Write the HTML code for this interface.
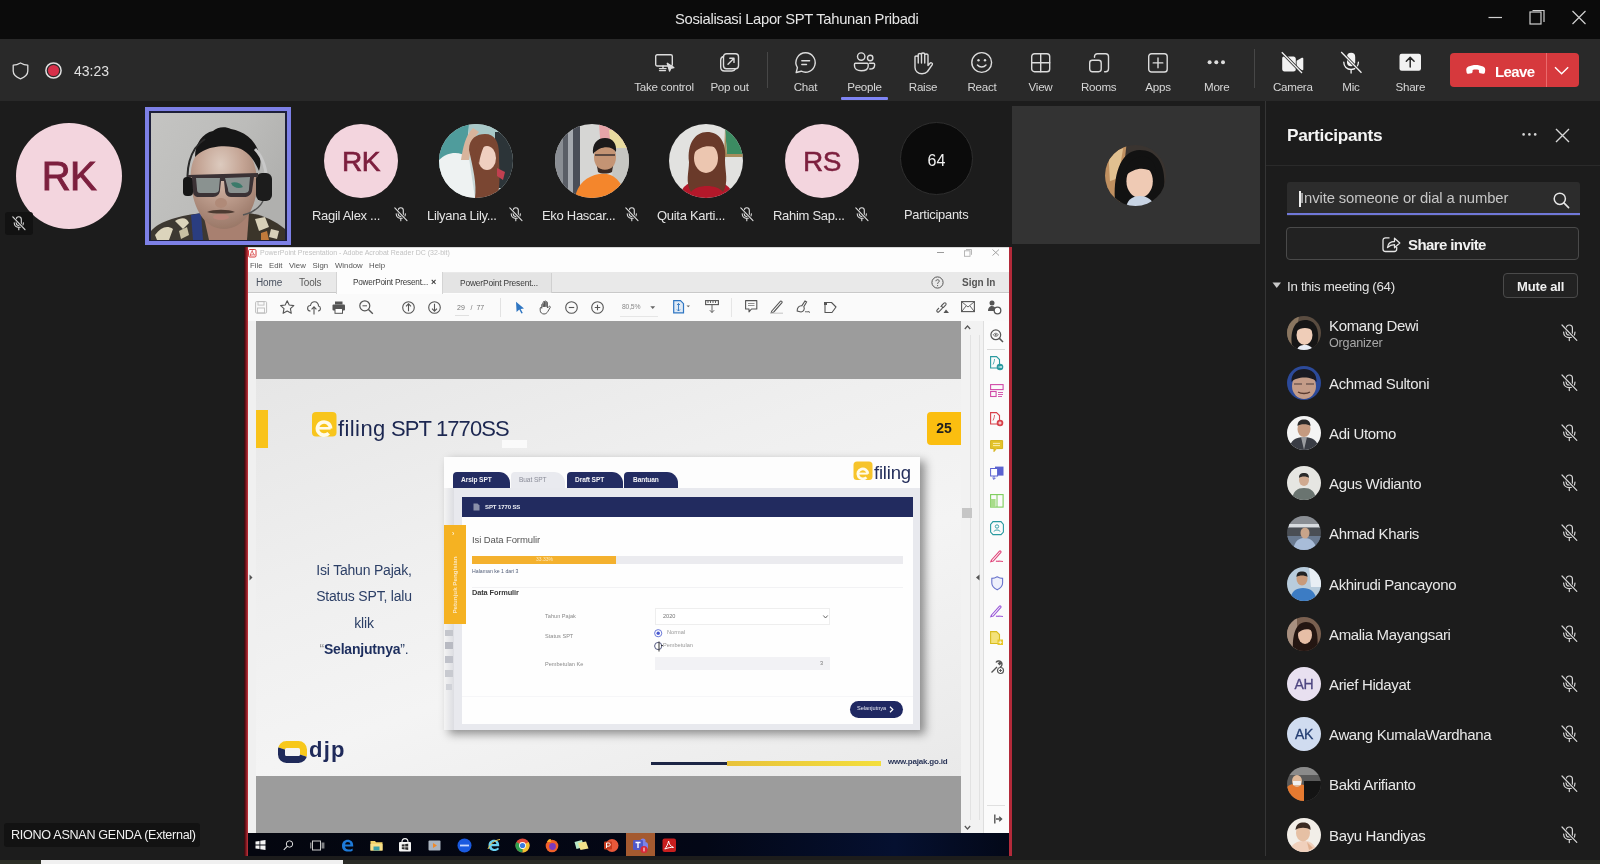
<!DOCTYPE html>
<html><head><meta charset="utf-8">
<style>
*{margin:0;padding:0;box-sizing:border-box}
html,body{width:1600px;height:864px;overflow:hidden;background:#1c1c1c;font-family:"Liberation Sans",sans-serif;color:#fff}
.a{position:absolute}
.t{position:absolute;white-space:nowrap;line-height:1}
svg{position:absolute;overflow:visible}
#title{left:0;top:0;width:1600px;height:39px;background:#0b0b0b}
#tb{left:0;top:39px;width:1600px;height:62px;background:#292929}
.lbl{position:absolute;top:80px;font-size:11.6px;color:#d6d6d6;width:80px;text-align:center;line-height:13px;letter-spacing:-0.25px}
.ic{stroke:#dcdcdc;stroke-width:1.4;fill:none;stroke-linecap:round;stroke-linejoin:round}

.pname{position:absolute;left:1329px;font-size:15px;color:#e8e8e8;letter-spacing:-0.35px;line-height:1}
.av{position:absolute;left:1287px;width:34px;height:34px;border-radius:50%;overflow:hidden}
.nm{position:absolute;top:209px;font-size:13px;color:#e4e4e4;letter-spacing:-0.3px;line-height:1}
</style></head><body><div id="root" style="position:absolute;left:0;top:0;width:1600px;height:864px;overflow:hidden;will-change:transform;background:#1c1c1c">

<!-- TITLE BAR -->
<div id="title" class="a"></div>
<div class="t" style="left:675px;top:11.5px;font-size:14.8px;color:#e6e6e6;letter-spacing:-0.32px">Sosialisasi Lapor SPT Tahunan Pribadi</div>
<svg style="left:1488px;top:10px" width="100" height="20">
 <line x1="0.5" y1="7.5" x2="14" y2="7.5" stroke="#d0d0d0" stroke-width="1.2"/>
 <rect x="42" y="2" width="11" height="12" fill="none" stroke="#d0d0d0" stroke-width="1.2"/>
 <path d="M44.5 0.5 H56 V12" fill="none" stroke="#d0d0d0" stroke-width="1.2"/>
 <path d="M84.5 1 L97.5 14 M97.5 1 L84.5 14" stroke="#d0d0d0" stroke-width="1.2"/>
</svg>

<!-- TOOLBAR -->
<div id="tb" class="a"></div>

<div class="t" style="left:12px;top:62px"></div>
<svg style="left:12px;top:62px" width="18" height="18"><path d="M8.5 1 C6 2.5 3.5 3.2 1.2 3.2 V9 C1.2 12.5 4 15 8.5 16.8 C13 15 15.8 12.5 15.8 9 V3.2 C13.5 3.2 11 2.5 8.5 1 Z" fill="none" stroke="#dcdcdc" stroke-width="1.3" stroke-linejoin="round"/></svg>
<svg style="left:45px;top:62px" width="18" height="18"><circle cx="8.5" cy="8.5" r="7.6" fill="none" stroke="#e0e0e0" stroke-width="1.5"/><circle cx="8.5" cy="8.5" r="5.6" fill="#d6304a"/></svg>
<div class="t" style="left:74px;top:64px;font-size:14px;color:#e0e0e0;letter-spacing:0px">43:23</div>

<!-- take control -->
<svg style="left:655px;top:54px" width="20" height="18" class="ic">
 <rect x="0.7" y="0.7" width="16.6" height="11.3" rx="1.5"/>
 <path d="M4.5 14.6 H11 M8 12.2 V14.6 M4.5 16.6 H10.5"/>
 <path d="M12.3 9.3 L18.8 13.6 L15.8 14.2 L14.6 17 Z" fill="#dcdcdc"/>
</svg>
<div class="lbl" style="left:624px">Take control</div>
<!-- pop out -->
<svg style="left:720px;top:53px" width="20" height="19" class="ic">
 <rect x="3.5" y="0.7" width="15" height="15" rx="3"/>
 <path d="M3.5 3.5 C1.7 4 0.7 5 0.7 7 V14 C0.7 16.5 2.2 18 4.5 18 H12 C14 18 15 17 15.5 15.8"/>
 <path d="M8 11.2 L14 5.2 M9.8 5.2 H14 V9.4"/>
</svg>
<div class="lbl" style="left:689.5px">Pop out</div>
<div class="a" style="left:767px;top:52px;width:1px;height:36px;background:#474747"></div>
<!-- chat -->
<svg style="left:795px;top:52px" width="22" height="22" class="ic">
 <path d="M10.7 0.8 A9.7 9.7 0 1 1 6.2 19.2 L1.2 20.5 L2.4 15.6 A9.7 9.7 0 0 1 10.7 0.8 Z"/>
 <path d="M6.8 8.7 H14.6 M6.8 12.5 H11.5"/>
</svg>
<div class="lbl" style="left:765.5px">Chat</div>
<!-- people -->
<svg style="left:854px;top:52px" width="22" height="20" class="ic">
 <circle cx="7.2" cy="4.6" r="3.7"/>
 <circle cx="16.2" cy="6" r="2.7"/>
 <path d="M1.3 11.3 H13.2 C13.8 11.3 14.2 11.7 14.2 12.3 V14 C14.2 17 11.2 18.8 7.2 18.8 C3.2 18.8 0.5 17 0.5 14 V12.2 C0.5 11.7 0.8 11.3 1.3 11.3 Z"/>
 <path d="M15.6 11.3 H19.6 C20.2 11.3 20.6 11.7 20.6 12.3 V13.2 C20.6 15.6 18.6 17 15.8 17"/>
</svg>
<div class="lbl" style="left:824.5px">People</div>
<div class="a" style="left:841px;top:97px;width:47px;height:3px;background:#7f85f5;border-radius:1px"></div>
<!-- raise -->
<svg style="left:914px;top:51.5px" width="21" height="23" class="ic">
 <path d="M1 14 V5 C1 3.6 4.25 3.6 4.25 5 V2.6 C4.25 1.2 7.5 1.2 7.5 2.6 V2 C7.5 0.6 10.75 0.6 10.75 2 V3 C10.75 1.6 14 1.6 14 3 V13.5 L16 11.2 C17 10.2 19 11.2 18.3 12.6 L13.5 19.5 C12.3 21 10.5 21.7 8 21.7 C4 21.7 1 19 1 15.5 Z M4.25 5 V11 M7.5 2.6 V11 M10.75 3 V11"/>
</svg>
<div class="lbl" style="left:883px">Raise</div>
<!-- react -->
<svg style="left:971px;top:52px" width="22" height="22" class="ic">
 <circle cx="10.7" cy="10.5" r="9.9"/>
 <circle cx="7.5" cy="8.3" r="1.2" fill="#dcdcdc" stroke="none"/>
 <circle cx="14" cy="8.3" r="1.2" fill="#dcdcdc" stroke="none"/>
 <path d="M6.4 13 C8.6 15.6 12.8 15.6 15 13"/>
</svg>
<div class="lbl" style="left:942px">React</div>
<!-- view -->
<svg style="left:1031px;top:53px" width="20" height="20" class="ic">
 <rect x="0.7" y="0.7" width="18" height="18" rx="2.8"/>
 <path d="M9.7 0.7 V18.7 M0.7 9.7 H18.7"/>
</svg>
<div class="lbl" style="left:1000.5px">View</div>
<!-- rooms -->
<svg style="left:1089px;top:53px" width="21" height="20" class="ic">
 <path d="M5.5 4.3 V3.5 C5.5 1.8 6.7 0.7 8.4 0.7 H16.6 C18.3 0.7 19.5 1.9 19.5 3.6 V15.8 C19.5 17.5 18.3 18.7 16.6 18.7 H15.6"/>
 <rect x="0.7" y="7.3" width="11.5" height="11.4" rx="2.6"/>
</svg>
<div class="lbl" style="left:1058.7px">Rooms</div>
<!-- apps -->
<svg style="left:1148px;top:53px" width="21" height="20" class="ic">
 <rect x="0.7" y="0.7" width="18.5" height="18.3" rx="2.8"/>
 <path d="M10 5 V14.7 M5.2 9.9 H14.8"/>
</svg>
<div class="lbl" style="left:1118px">Apps</div>
<!-- more -->
<svg style="left:1207px;top:59px" width="20" height="8">
 <circle cx="2.6" cy="3.3" r="2" fill="#dcdcdc"/><circle cx="9.3" cy="3.3" r="2" fill="#dcdcdc"/><circle cx="16" cy="3.3" r="2" fill="#dcdcdc"/>
</svg>
<div class="lbl" style="left:1176.7px">More</div>
<div class="a" style="left:1254px;top:49px;width:1px;height:39px;background:#474747"></div>
<!-- camera off -->
<svg style="left:1281px;top:51px" width="24" height="24">
 <path d="M2.6 5.5 H12.5 C13.8 5.5 14.8 6.5 14.8 7.8 V18.2 C14.8 19.5 13.8 20.5 12.5 20.5 H3.5 C2 20.5 1.2 19.5 1.2 18 V7.5 C1.2 6.2 1.8 5.5 2.6 5.5 Z M15.6 9.8 L20.8 6.8 C21.5 6.4 22.3 6.8 22.3 7.6 V18.3 C22.3 19.1 21.5 19.5 20.8 19.1 L15.6 16.2 Z" fill="#f2f2f2"/>
 <path d="M0.8 1.2 L21 22" stroke="#292929" stroke-width="3"/>
 <path d="M0.8 1.2 L21 22" stroke="#f2f2f2" stroke-width="1.3"/>
</svg>
<div class="lbl" style="left:1252.8px">Camera</div>
<!-- mic off -->
<svg style="left:1340px;top:51px" width="24" height="24">
 <rect x="7" y="1.8" width="8.2" height="13.5" rx="4.1" fill="#f2f2f2"/>
 <path d="M3.8 11.2 C3.8 15.6 7 18.5 11.1 18.5 C15.2 18.5 18.4 15.6 18.4 11.2 M11.1 18.5 V22" fill="none" stroke="#f2f2f2" stroke-width="1.3" stroke-linecap="round"/>
 <path d="M1.2 1 L21.5 21.8" stroke="#292929" stroke-width="3"/>
 <path d="M1.2 1 L21.5 21.8" stroke="#f2f2f2" stroke-width="1.3"/>
</svg>
<div class="lbl" style="left:1311px">Mic</div>
<!-- share -->
<svg style="left:1399px;top:53px" width="23" height="19">
 <rect x="0.5" y="0.8" width="21.5" height="17" rx="2.2" fill="#f2f2f2"/>
 <path d="M11.2 14 V4.6 M7.3 8.3 L11.2 4.4 L15.1 8.3" fill="none" stroke="#292929" stroke-width="1.5" stroke-linecap="round" stroke-linejoin="round"/>
</svg>
<div class="lbl" style="left:1370.3px">Share</div>
<!-- leave -->
<div class="a" style="left:1450px;top:53px;width:129px;height:34px;background:#d6393d;border-radius:4px"></div>
<div class="a" style="left:1546px;top:53px;width:1px;height:34px;background:#ea6a6c"></div>
<svg style="left:1465px;top:64px" width="22" height="12">
 <path d="M1.3 6.5 C1 4.8 1.8 3.4 3.4 2.6 C8 0.4 13.5 0.4 18.1 2.6 C19.7 3.4 20.4 4.8 20.2 6.5 L19.9 8.4 C19.7 9.4 18.9 10 17.9 9.8 L15.4 9.3 C14.5 9.1 13.9 8.4 13.9 7.4 V5.9 C11.8 5.3 9.7 5.3 7.6 5.9 V7.4 C7.6 8.4 7 9.1 6.1 9.3 L3.6 9.8 C2.6 10 1.8 9.4 1.6 8.4 Z" fill="#ffffff"/>
</svg>
<div class="t" style="left:1495px;top:64px;font-size:15px;font-weight:bold;color:#fff;letter-spacing:-0.6px">Leave</div>
<svg style="left:1554px;top:66px" width="16" height="10"><path d="M1 1.2 L7.6 7.8 L14.2 1.2" fill="none" stroke="#fff" stroke-width="1.4"/></svg>

<!-- STAGE STRIP -->
<div class="a" style="left:16px;top:123px;width:106px;height:106px;border-radius:50%;background:#f3d5de"></div>
<div class="t" style="left:16px;top:156px;width:106px;text-align:center;font-size:40px;color:#7c1f3e;letter-spacing:-0.5px;-webkit-text-stroke:1px #7c1f3e">RK</div>
<div class="a" style="left:5px;top:212px;width:28px;height:23px;background:#121212;border-radius:3px"></div>
<svg style="left:12px;top:216px" width="14" height="15"><g fill="none" stroke="#d8d8d8" stroke-width="1.1" stroke-linecap="round"><rect x="4.3" y="0.8" width="5" height="8.6" rx="2.5"/><path d="M2.2 6.8 C2.2 9.6 4.3 11.4 6.8 11.4 C9.3 11.4 11.4 9.6 11.4 6.8 M6.8 11.4 V13.8"/><path d="M0.8 0.8 L13 13.6" stroke="#1c1c1c" stroke-width="2.4"/><path d="M0.8 0.8 L13 13.6"/></g></svg>

<!-- video -->
<div class="a" style="left:145px;top:107px;width:146px;height:138px;background:#7d80e6"></div>
<div class="a" style="left:149px;top:111px;width:138px;height:130px;background:#1d1f3a"></div>
<svg style="left:151px;top:113px" width="134" height="127" viewBox="0 0 134 127">
 <defs>
  <linearGradient id="wall" x1="0" y1="0" x2="1" y2="0.5"><stop offset="0" stop-color="#c4c4c2"/><stop offset="0.6" stop-color="#bcbcba"/><stop offset="1" stop-color="#b0b0ae"/></linearGradient>
  <radialGradient id="skin" cx="0.45" cy="0.25" r="0.75"><stop offset="0" stop-color="#dccabe"/><stop offset="0.45" stop-color="#c4a494"/><stop offset="1" stop-color="#9a7868"/></radialGradient>
  <clipPath id="vc"><rect width="134" height="127"/></clipPath>
  <filter id="vb" x="-5%" y="-5%" width="110%" height="110%"><feGaussianBlur stdDeviation="0.7"/></filter>
 </defs>
 <g clip-path="url(#vc)"><g filter="url(#vb)">
 <rect width="134" height="127" fill="url(#wall)"/>
 <!-- neck -->
 <path d="M52 98 L98 96 L98 127 L54 127 Z" fill="#a88070"/>
 <!-- shirt left -->
 <path d="M0 127 V118 C8 108 30 102 52 100 L58 127 Z" fill="#3e3830"/>
 <path d="M4 122 C10 114 16 112 22 116 L18 127 H6 Z M24 108 C30 104 36 104 38 110 L32 116 Z" fill="#dcd4bc"/>
 <path d="M40 102 L50 100 L52 127 H42 Z" fill="#2c3c80"/>
 <path d="M28 118 L36 114 L38 122 L30 126 Z" fill="#c8c0a4"/>
 <!-- shirt right -->
 <path d="M96 127 L98 100 C112 102 124 108 134 116 V127 Z" fill="#3a342c"/>
 <path d="M104 106 L114 104 L118 114 L108 118 Z M120 116 L128 118 L126 126 L118 124 Z" fill="#d8d0b8"/>
 <path d="M110 120 L116 118 L118 127 H110 Z" fill="#c07a3a"/>
 <!-- head -->
 <path d="M40 70 C38 48 46 30 72 30 C96 30 106 46 106 70 C106 96 92 116 73 116 C54 116 42 96 40 70 Z" fill="url(#skin)"/>
 <!-- hair -->
 <path d="M44 44 C44 30 52 20 62 18 C66 14 74 13 80 16 C92 18 104 26 108 40 C110 46 110 52 108 58 C104 48 98 40 90 36 C80 32 62 32 52 38 C48 40 46 42 44 44 Z" fill="#181616"/>
 <!-- headset -->
 <path d="M38 78 C34 58 38 36 54 26" fill="none" stroke="#2a2a2a" stroke-width="2"/>
 <path d="M104 36 C112 44 116 58 116 74" fill="none" stroke="#c8c8c8" stroke-width="3"/>
 <rect x="32" y="64" width="10" height="19" rx="4" fill="#161616"/>
 <rect x="105" y="60" width="16" height="28" rx="6" fill="#1a1a1a"/>
 <path d="M112 88 C108 96 100 100 92 102" fill="none" stroke="#555" stroke-width="1.5"/>
 <!-- glasses -->
 <path d="M37 62 L107 60 L107 64 L103 64 L101 78 C100 82 97 84 93 84 L80 84 C76 84 74 81 74 77 L73 68 L70 68 L69 77 C69 81 66 84 62 84 L48 84 C44 84 42 82 42 78 L41 64 L37 64 Z" fill="#3a3034"/>
 <path d="M45 65 L69 65 L68 76 C68 79 66 80 63 80 L49 80 C47 80 46 79 46 76 Z M74 65 L99 64 L98 76 C98 79 96 80 93 80 L80 80 C78 80 77 79 77 76 Z" fill="#8a9290"/>
 <path d="M80 70 C84 68 90 70 92 74 C88 76 82 75 80 70 Z" fill="#3a7a6a"/>
 <!-- nose / mustache / mouth -->
 <ellipse cx="70" cy="90" rx="6" ry="5" fill="#b08a78"/>
 <path d="M56 99 C62 96 78 96 84 99 C78 101 62 101 56 99 Z" fill="#4e3a32"/>
 <ellipse cx="70" cy="104" rx="8" ry="3" fill="#b88478"/>
 </g></g>
</svg>

<div class="a" style="left:324px;top:124px;width:74px;height:74px;border-radius:50%;background:#f3d5de"></div>
<div class="t" style="left:324px;top:148px;width:74px;text-align:center;font-size:28px;color:#7c1f3e;letter-spacing:-0.5px;-webkit-text-stroke:0.7px #7c1f3e">RK</div>
<div class="nm" style="left:312px">Ragil Alex ...</div>
<svg style="left:394px;top:207px" width="14" height="15"><g fill="none" stroke="#dedede" stroke-width="1.1" stroke-linecap="round"><rect x="4.3" y="0.8" width="5" height="8.6" rx="2.5"/><path d="M2.2 6.8 C2.2 9.6 4.3 11.4 6.8 11.4 C9.3 11.4 11.4 9.6 11.4 6.8 M6.8 11.4 V13.8"/><path d="M0.8 0.8 L13 13.6" stroke="#1c1c1c" stroke-width="2.4"/><path d="M0.8 0.8 L13 13.6"/></g></svg>

<svg style="left:439px;top:124px" width="74" height="74" viewBox="0 0 74 74">
 <defs><clipPath id="c1"><circle cx="37" cy="37" r="37"/></clipPath></defs>
 <g clip-path="url(#c1)">
  <rect width="74" height="74" fill="#c8d8d8"/>
  <path d="M0 0 H30 L26 40 L0 44 Z" fill="#4f9c9c"/>
  <path d="M30 0 H62 V14 H30 Z" fill="#a8c8c8"/>
  <path d="M56 8 H74 V64 H56 Z" fill="#2c3438"/>
  <path d="M0 36 C8 28 20 26 30 34 L36 74 H0 Z" fill="#eef2f2"/>
  <path d="M22 36 C24 24 26 12 34 4 L40 8 C34 14 32 24 30 36 Z" fill="#d8b49c"/>
  <path d="M30 26 C30 14 38 10 46 10 C56 10 60 18 60 30 C60 46 62 60 58 74 H36 C38 60 34 44 30 26 Z" fill="#7a4632"/>
  <ellipse cx="48" cy="34" rx="9" ry="12" fill="#efcfc0"/>
  <path d="M36 30 C38 18 44 14 50 14 C46 20 42 26 40 40 Z" fill="#7a4632"/>
  <path d="M58 44 L66 48 L64 56 L58 52 Z" fill="#c04050"/>
 </g>
</svg>
<div class="nm" style="left:427px">Lilyana Lily...</div>
<svg style="left:509px;top:207px" width="14" height="15"><g fill="none" stroke="#dedede" stroke-width="1.1" stroke-linecap="round"><rect x="4.3" y="0.8" width="5" height="8.6" rx="2.5"/><path d="M2.2 6.8 C2.2 9.6 4.3 11.4 6.8 11.4 C9.3 11.4 11.4 9.6 11.4 6.8 M6.8 11.4 V13.8"/><path d="M0.8 0.8 L13 13.6" stroke="#1c1c1c" stroke-width="2.4"/><path d="M0.8 0.8 L13 13.6"/></g></svg>

<svg style="left:555px;top:124px" width="74" height="74" viewBox="0 0 74 74">
 <defs><clipPath id="c2"><circle cx="37" cy="37" r="37"/></clipPath></defs>
 <g clip-path="url(#c2)">
  <rect width="74" height="74" fill="#d6d6d4"/>
  <rect x="0" y="0" width="8" height="74" fill="#8a8e94"/>
  <rect x="8" y="0" width="5" height="74" fill="#5a5e66"/>
  <rect x="13" y="0" width="5" height="74" fill="#a6aab0"/>
  <rect x="18" y="0" width="7" height="74" fill="#4a4e58"/>
  <path d="M44 0 H74 V26 H46 Z" fill="#e6a4a8"/>
  <path d="M54 6 H74 V24 H56 Z" fill="#e8dca0"/>
  <path d="M56 24 H74 V62 H58 Z" fill="#c6c6c2"/>
  <path d="M20 74 C22 60 32 52 44 50 C56 48 66 54 72 74 Z" fill="#f4862c"/>
  <ellipse cx="50" cy="33" rx="11" ry="14" fill="#c49474"/>
  <path d="M38 30 C37 20 42 14 50 14 C58 14 62 20 61 28 C57 22 46 21 38 30 Z" fill="#1c1a1a"/>
  <path d="M40 31 H60" stroke="#3a3030" stroke-width="1.3"/>
  <path d="M42 42 C45 47 55 47 58 42 L57 48 C53 50 46 50 43 48 Z" fill="#3a2a24"/>
 </g>
</svg>
<div class="nm" style="left:542px">Eko Hascar...</div>
<svg style="left:625px;top:207px" width="14" height="15"><g fill="none" stroke="#dedede" stroke-width="1.1" stroke-linecap="round"><rect x="4.3" y="0.8" width="5" height="8.6" rx="2.5"/><path d="M2.2 6.8 C2.2 9.6 4.3 11.4 6.8 11.4 C9.3 11.4 11.4 9.6 11.4 6.8 M6.8 11.4 V13.8"/><path d="M0.8 0.8 L13 13.6" stroke="#1c1c1c" stroke-width="2.4"/><path d="M0.8 0.8 L13 13.6"/></g></svg>

<svg style="left:669px;top:124px" width="74" height="74" viewBox="0 0 74 74">
 <defs><clipPath id="c3"><circle cx="37" cy="37" r="37"/></clipPath></defs>
 <g clip-path="url(#c3)">
  <rect width="74" height="74" fill="#e2e2e0"/>
  <path d="M56 4 H74 V30 H58 Z" fill="#3c8c62"/>
  <path d="M56 4 L58 30 H74 V33 H55 Z" fill="#a88c5c"/>
  <path d="M10 74 C12 62 20 56 37 56 C54 56 62 62 66 74 Z" fill="#b3182a"/>
  <path d="M20 38 C18 20 26 8 38 8 C50 8 58 18 56 36 C56 48 60 58 54 68 C48 60 28 60 22 68 C16 58 20 48 20 38 Z" fill="#6a3a2a"/>
  <ellipse cx="37" cy="34" rx="12" ry="15" fill="#ecc6b0"/>
  <path d="M24 30 C26 16 34 12 40 12 C48 12 52 18 52 28 C46 20 32 20 24 30 Z" fill="#6a3a2a"/>
 </g>
</svg>
<div class="nm" style="left:657px">Quita Karti...</div>
<svg style="left:740px;top:207px" width="14" height="15"><g fill="none" stroke="#dedede" stroke-width="1.1" stroke-linecap="round"><rect x="4.3" y="0.8" width="5" height="8.6" rx="2.5"/><path d="M2.2 6.8 C2.2 9.6 4.3 11.4 6.8 11.4 C9.3 11.4 11.4 9.6 11.4 6.8 M6.8 11.4 V13.8"/><path d="M0.8 0.8 L13 13.6" stroke="#1c1c1c" stroke-width="2.4"/><path d="M0.8 0.8 L13 13.6"/></g></svg>

<div class="a" style="left:785px;top:124px;width:74px;height:74px;border-radius:50%;background:#f3d5de"></div>
<div class="t" style="left:785px;top:148px;width:74px;text-align:center;font-size:28px;color:#7c1f3e;letter-spacing:-0.5px;-webkit-text-stroke:0.5px #7c1f3e">RS</div>
<div class="nm" style="left:773px">Rahim Sap...</div>
<svg style="left:855px;top:207px" width="14" height="15"><g fill="none" stroke="#dedede" stroke-width="1.1" stroke-linecap="round"><rect x="4.3" y="0.8" width="5" height="8.6" rx="2.5"/><path d="M2.2 6.8 C2.2 9.6 4.3 11.4 6.8 11.4 C9.3 11.4 11.4 9.6 11.4 6.8 M6.8 11.4 V13.8"/><path d="M0.8 0.8 L13 13.6" stroke="#1c1c1c" stroke-width="2.4"/><path d="M0.8 0.8 L13 13.6"/></g></svg>

<div class="a" style="left:900px;top:122px;width:73px;height:73px;border-radius:50%;background:#0b0b0b;border:1px solid #2e2e2e"></div>
<div class="t" style="left:900px;top:153px;width:73px;text-align:center;font-size:16px;color:#f0f0f0">64</div>
<div class="nm" style="left:904px;font-size:12.9px;letter-spacing:-0.25px">Participants</div>

<div class="a" style="left:1012px;top:106px;width:248px;height:138px;background:#333333"></div>
<svg style="left:1105px;top:145px" width="61" height="61" viewBox="0 0 74 74">
 <defs><clipPath id="c4"><circle cx="37" cy="37" r="37"/></clipPath></defs>
 <g clip-path="url(#c4)">
  <rect width="74" height="74" fill="#3a3430"/>
  <path d="M0 0 H26 L18 74 H0 Z" fill="#c09060"/>
  <path d="M4 10 L22 4 L16 40 L6 44 Z" fill="#e0c090"/>
  <path d="M12 66 C10 30 22 6 42 6 C62 6 72 22 72 44 C72 58 66 66 62 72 L16 74 Z" fill="#121212"/>
  <ellipse cx="42" cy="44" rx="16" ry="20" fill="#efcab4"/>
  <path d="M24 38 C26 20 36 14 48 14 C58 16 62 26 62 36 C52 26 36 26 24 38 Z" fill="#121212"/>
  <path d="M26 74 C28 66 34 62 42 62 C52 62 58 68 60 74 Z" fill="#c8d4e4"/>
 </g>
</svg>


<!-- PANEL -->
<div class="a" style="left:1265px;top:101px;width:1px;height:763px;background:#353535"></div>
<div class="t" style="left:1287px;top:127px;font-size:17.3px;font-weight:bold;color:#f4f4f4;letter-spacing:-0.3px">Participants</div>
<svg style="left:1522px;top:132px" width="16" height="5"><circle cx="1.6" cy="2.4" r="1.3" fill="#d6d6d6"/><circle cx="7.4" cy="2.4" r="1.3" fill="#d6d6d6"/><circle cx="13.2" cy="2.4" r="1.3" fill="#d6d6d6"/></svg>
<svg style="left:1555px;top:128px" width="15" height="15"><path d="M1 1 L14 14 M14 1 L1 14" stroke="#d6d6d6" stroke-width="1.4"/></svg>
<div class="a" style="left:1266px;top:165px;width:334px;height:1px;background:#2a2a2a"></div>
<div class="a" style="left:1287px;top:182px;width:293px;height:34px;background:#2c2c2c;border-radius:3px 3px 0 0"></div>
<div class="a" style="left:1287px;top:213px;width:293px;height:2px;background:#7078d8"></div>
<div class="a" style="left:1299px;top:191px;width:1.5px;height:16px;background:#f0f0f0"></div>
<div class="t" style="left:1300px;top:191px;font-size:14.8px;color:#c6c6c6;letter-spacing:-0.1px">Invite someone or dial a number</div>
<svg style="left:1553px;top:192px" width="17" height="17"><circle cx="6.8" cy="6.8" r="5.6" fill="none" stroke="#e6e6e6" stroke-width="1.5"/><path d="M10.9 10.9 L15.6 15.6" stroke="#e6e6e6" stroke-width="1.6" stroke-linecap="round"/></svg>
<div class="a" style="left:1286px;top:227px;width:293px;height:33px;border:1px solid #4a4a4a;border-radius:4px;background:#222"></div>
<svg style="left:1382px;top:236px" width="19" height="17"><path d="M7.5 1.8 H3.5 C2.1 1.8 1 2.9 1 4.3 V13 C1 14.4 2.1 15.5 3.5 15.5 H12.2 C13.6 15.5 14.7 14.4 14.7 13 V11" fill="none" stroke="#e6e6e6" stroke-width="1.3"/><path d="M5.5 11.5 C6 7.5 8.8 5.5 12.5 5.5 V2.2 L17.8 7 L12.5 11.8 V8.6 C9.8 8.6 7.4 9.6 5.5 11.5 Z" fill="none" stroke="#e6e6e6" stroke-width="1.3" stroke-linejoin="round"/></svg>
<div class="t" style="left:1408px;top:237px;font-size:15px;font-weight:bold;color:#f2f2f2;letter-spacing:-0.6px">Share invite</div>
<svg style="left:1272px;top:282px" width="10" height="7"><path d="M0.5 0.5 H9 L4.75 6 Z" fill="#c8c8c8"/></svg>
<div class="t" style="left:1287px;top:280px;font-size:13.3px;color:#e2e2e2;letter-spacing:-0.3px">In this meeting (64)</div>
<div class="a" style="left:1503px;top:273px;width:75px;height:25px;border:1px solid #4a4a4a;border-radius:4px;background:#222"></div>
<div class="t" style="left:1517px;top:280px;font-size:13px;font-weight:bold;color:#f0f0f0;letter-spacing:-0.15px">Mute all</div>

<svg style="left:1287px;top:316px" width="34" height="34" viewBox="0 0 34 34"><defs><clipPath id="p333"><circle cx="17" cy="17" r="17"/></clipPath></defs><g clip-path="url(#p333)"><rect width="34" height="34" fill="#5a4c40"/><path d="M0 0 H12 L6 34 H0 Z" fill="#8a7660"/><path d="M5 30 C3 18 6 4 18 4 C29 4 32 14 31 24 C30 30 28 34 28 34 H6 Z" fill="#171616"/><ellipse cx="17.5" cy="19" rx="8" ry="10" fill="#efcdb8"/><path d="M9.5 15 C11 9 15 7.5 19 7.5 C23 7.5 26 10 26 15 C22 11 14 11 9.5 15 Z" fill="#171616"/><path d="M10 34 C11 30 14 29 18 29 C22 29 25 31 26 34 Z" fill="#e8ecf4"/></g></svg>
<div class="pname" style="top:318.0px">Komang Dewi</div>
<div class="t" style="left:1329px;top:337px;font-size:12.6px;color:#a8a8a8;letter-spacing:-0.2px">Organizer</div>
<svg style="left:1561px;top:324px" width="17" height="18"><g fill="none" stroke="#d8d8d8" stroke-width="1.2" stroke-linecap="round"><rect x="5.2" y="1" width="6.2" height="10" rx="3.1"/><path d="M2.6 8 C2.6 11.4 5.2 13.6 8.3 13.6 C11.4 13.6 14 11.4 14 8 M8.3 13.6 V16.6"/><path d="M1 1 L15.8 16.4" stroke="#1c1c1c" stroke-width="2.8"/><path d="M1 1 L15.8 16.4"/></g></svg>
<svg style="left:1287px;top:366px" width="34" height="34" viewBox="0 0 34 34"><defs><clipPath id="p383"><circle cx="17" cy="17" r="17"/></clipPath></defs><g clip-path="url(#p383)"><rect width="34" height="34" fill="#2c4a9a"/><ellipse cx="17" cy="20" rx="12" ry="13" fill="#c49c88"/><path d="M4.5 16 C4 7 10 3 17 3 C25 3 30 8 29.5 16 C26 10 9 10 4.5 16 Z" fill="#1a1a22"/><path d="M7 18 H15 M19 18 H27" stroke="#4a3a3a" stroke-width="1.2"/><path d="M11 26 C14 28 20 28 23 26" stroke="#5a3a30" stroke-width="1.4" fill="none"/></g></svg>
<div class="pname" style="top:376.0px">Achmad Sultoni</div>
<svg style="left:1561px;top:374px" width="17" height="18"><g fill="none" stroke="#d8d8d8" stroke-width="1.2" stroke-linecap="round"><rect x="5.2" y="1" width="6.2" height="10" rx="3.1"/><path d="M2.6 8 C2.6 11.4 5.2 13.6 8.3 13.6 C11.4 13.6 14 11.4 14 8 M8.3 13.6 V16.6"/><path d="M1 1 L15.8 16.4" stroke="#1c1c1c" stroke-width="2.8"/><path d="M1 1 L15.8 16.4"/></g></svg>
<svg style="left:1287px;top:416px" width="34" height="34" viewBox="0 0 34 34"><defs><clipPath id="p433"><circle cx="17" cy="17" r="17"/></clipPath></defs><g clip-path="url(#p433)"><rect width="34" height="34" fill="#f4f4f4"/><path d="M2 34 C3 24 9 21 17 21 C25 21 31 24 32 34 Z" fill="#3a3d45"/><path d="M14 21 L17 34 L20 21 Z" fill="#9a9ca0"/><ellipse cx="17" cy="13" rx="6.5" ry="8" fill="#c49a80"/><path d="M10.5 10 C10.5 5 13.5 3.5 17 3.5 C20.5 3.5 23.5 5 23.5 10 C21 7.5 13 7.5 10.5 10 Z" fill="#2a2a2a"/></g></svg>
<div class="pname" style="top:426.0px">Adi Utomo</div>
<svg style="left:1561px;top:424px" width="17" height="18"><g fill="none" stroke="#d8d8d8" stroke-width="1.2" stroke-linecap="round"><rect x="5.2" y="1" width="6.2" height="10" rx="3.1"/><path d="M2.6 8 C2.6 11.4 5.2 13.6 8.3 13.6 C11.4 13.6 14 11.4 14 8 M8.3 13.6 V16.6"/><path d="M1 1 L15.8 16.4" stroke="#1c1c1c" stroke-width="2.8"/><path d="M1 1 L15.8 16.4"/></g></svg>
<svg style="left:1287px;top:466px" width="34" height="34" viewBox="0 0 34 34"><defs><clipPath id="p483"><circle cx="17" cy="17" r="17"/></clipPath></defs><g clip-path="url(#p483)"><rect width="34" height="34" fill="#e6e6e2"/><path d="M5 34 C6 25 10 22 17 22 C24 22 28 25 29 34 Z" fill="#6a7470"/><ellipse cx="17" cy="14" rx="5" ry="6" fill="#d0aa90"/><path d="M12 12 C12 8 14 7 17 7 C20 7 22 8 22 12 C20 10 14 10 12 12 Z" fill="#2a2a2a"/></g></svg>
<div class="pname" style="top:476.0px">Agus Widianto</div>
<svg style="left:1561px;top:474px" width="17" height="18"><g fill="none" stroke="#d8d8d8" stroke-width="1.2" stroke-linecap="round"><rect x="5.2" y="1" width="6.2" height="10" rx="3.1"/><path d="M2.6 8 C2.6 11.4 5.2 13.6 8.3 13.6 C11.4 13.6 14 11.4 14 8 M8.3 13.6 V16.6"/><path d="M1 1 L15.8 16.4" stroke="#1c1c1c" stroke-width="2.8"/><path d="M1 1 L15.8 16.4"/></g></svg>
<svg style="left:1287px;top:516px" width="34" height="34" viewBox="0 0 34 34"><defs><clipPath id="p533"><circle cx="17" cy="17" r="17"/></clipPath></defs><g clip-path="url(#p533)"><rect width="34" height="34" fill="#4a4e54"/><rect x="0" y="0" width="34" height="12" fill="#8a8e94"/><path d="M0 20 H34 V34 H0 Z" fill="#6a7a90"/><path d="M6 34 C8 24 12 22 18 22 C24 22 28 26 30 34 Z" fill="#a8bcd8"/><ellipse cx="18" cy="17" rx="4.5" ry="5.5" fill="#c8a48a"/><rect x="2" y="8" width="30" height="3" fill="#d8dce0"/></g></svg>
<div class="pname" style="top:526.0px">Ahmad Kharis</div>
<svg style="left:1561px;top:524px" width="17" height="18"><g fill="none" stroke="#d8d8d8" stroke-width="1.2" stroke-linecap="round"><rect x="5.2" y="1" width="6.2" height="10" rx="3.1"/><path d="M2.6 8 C2.6 11.4 5.2 13.6 8.3 13.6 C11.4 13.6 14 11.4 14 8 M8.3 13.6 V16.6"/><path d="M1 1 L15.8 16.4" stroke="#1c1c1c" stroke-width="2.8"/><path d="M1 1 L15.8 16.4"/></g></svg>
<svg style="left:1287px;top:567px" width="34" height="34" viewBox="0 0 34 34"><defs><clipPath id="p584"><circle cx="17" cy="17" r="17"/></clipPath></defs><g clip-path="url(#p584)"><rect width="34" height="34" fill="#b8ccdc"/><path d="M22 0 H34 V20 H24 Z" fill="#e8eef4"/><path d="M3 34 C4 24 9 21 16 21 C23 21 28 24 30 34 Z" fill="#3c7cc4"/><ellipse cx="15" cy="12" rx="5.5" ry="6.5" fill="#c89a7a"/><path d="M9.5 10 C9.5 5.5 12 4.5 15 4.5 C18 4.5 20.5 5.5 20.5 10 C18 8 12 8 9.5 10 Z" fill="#222"/></g></svg>
<div class="pname" style="top:577.0px">Akhirudi Pancayono</div>
<svg style="left:1561px;top:575px" width="17" height="18"><g fill="none" stroke="#d8d8d8" stroke-width="1.2" stroke-linecap="round"><rect x="5.2" y="1" width="6.2" height="10" rx="3.1"/><path d="M2.6 8 C2.6 11.4 5.2 13.6 8.3 13.6 C11.4 13.6 14 11.4 14 8 M8.3 13.6 V16.6"/><path d="M1 1 L15.8 16.4" stroke="#1c1c1c" stroke-width="2.8"/><path d="M1 1 L15.8 16.4"/></g></svg>
<svg style="left:1287px;top:617px" width="34" height="34" viewBox="0 0 34 34"><defs><clipPath id="p634"><circle cx="17" cy="17" r="17"/></clipPath></defs><g clip-path="url(#p634)"><rect width="34" height="34" fill="#7a6050"/><path d="M0 0 H10 V34 H0 Z" fill="#a89080"/><path d="M6 34 C5 20 8 5 19 5 C29 5 32 16 30 34 Z" fill="#241612"/><ellipse cx="18" cy="18" rx="7" ry="9" fill="#e6bea6"/><path d="M11 16 C12 10 15 8 19 8 C23 8 25 10 26 14 C21 11 15 12 11 16 Z" fill="#241612"/></g></svg>
<div class="pname" style="top:627.0px">Amalia Mayangsari</div>
<svg style="left:1561px;top:625px" width="17" height="18"><g fill="none" stroke="#d8d8d8" stroke-width="1.2" stroke-linecap="round"><rect x="5.2" y="1" width="6.2" height="10" rx="3.1"/><path d="M2.6 8 C2.6 11.4 5.2 13.6 8.3 13.6 C11.4 13.6 14 11.4 14 8 M8.3 13.6 V16.6"/><path d="M1 1 L15.8 16.4" stroke="#1c1c1c" stroke-width="2.8"/><path d="M1 1 L15.8 16.4"/></g></svg>
<div class="a" style="left:1287px;top:667px;width:34px;height:34px;border-radius:50%;background:#e8e0f0"></div><div class="t" style="left:1287px;top:677px;width:34px;text-align:center;font-size:14px;color:#4e4680;letter-spacing:-0.3px;-webkit-text-stroke:0.3px #4e4680">AH</div>
<div class="pname" style="top:677.0px">Arief Hidayat</div>
<svg style="left:1561px;top:675px" width="17" height="18"><g fill="none" stroke="#d8d8d8" stroke-width="1.2" stroke-linecap="round"><rect x="5.2" y="1" width="6.2" height="10" rx="3.1"/><path d="M2.6 8 C2.6 11.4 5.2 13.6 8.3 13.6 C11.4 13.6 14 11.4 14 8 M8.3 13.6 V16.6"/><path d="M1 1 L15.8 16.4" stroke="#1c1c1c" stroke-width="2.8"/><path d="M1 1 L15.8 16.4"/></g></svg>
<div class="a" style="left:1287px;top:717px;width:34px;height:34px;border-radius:50%;background:#d0dcf0"></div><div class="t" style="left:1287px;top:727px;width:34px;text-align:center;font-size:14px;color:#243e72;letter-spacing:-0.3px;-webkit-text-stroke:0.3px #243e72">AK</div>
<div class="pname" style="top:727.0px">Awang KumalaWardhana</div>
<svg style="left:1561px;top:725px" width="17" height="18"><g fill="none" stroke="#d8d8d8" stroke-width="1.2" stroke-linecap="round"><rect x="5.2" y="1" width="6.2" height="10" rx="3.1"/><path d="M2.6 8 C2.6 11.4 5.2 13.6 8.3 13.6 C11.4 13.6 14 11.4 14 8 M8.3 13.6 V16.6"/><path d="M1 1 L15.8 16.4" stroke="#1c1c1c" stroke-width="2.8"/><path d="M1 1 L15.8 16.4"/></g></svg>
<svg style="left:1287px;top:767px" width="34" height="34" viewBox="0 0 34 34"><defs><clipPath id="p784"><circle cx="17" cy="17" r="17"/></clipPath></defs><g clip-path="url(#p784)"><rect width="34" height="34" fill="#5a5a5a"/><rect x="17" y="14" width="17" height="20" fill="#141414"/><path d="M0 34 V20 C4 16 10 16 17 18 V34 Z" fill="#e67a30"/><ellipse cx="10" cy="14" rx="5" ry="6" fill="#e0b898"/><rect x="6" y="14" width="8" height="4" fill="#f0f0f0"/><path d="M0 0 H34 V8 H0 Z" fill="#8a8a8a"/></g></svg>
<div class="pname" style="top:777.0px">Bakti Arifianto</div>
<svg style="left:1561px;top:775px" width="17" height="18"><g fill="none" stroke="#d8d8d8" stroke-width="1.2" stroke-linecap="round"><rect x="5.2" y="1" width="6.2" height="10" rx="3.1"/><path d="M2.6 8 C2.6 11.4 5.2 13.6 8.3 13.6 C11.4 13.6 14 11.4 14 8 M8.3 13.6 V16.6"/><path d="M1 1 L15.8 16.4" stroke="#1c1c1c" stroke-width="2.8"/><path d="M1 1 L15.8 16.4"/></g></svg>
<svg style="left:1287px;top:818px" width="34" height="34" viewBox="0 0 34 34"><defs><clipPath id="p835"><circle cx="17" cy="17" r="17"/></clipPath></defs><g clip-path="url(#p835)"><rect width="34" height="34" fill="#f2eee8"/><path d="M2 34 C4 26 10 23 17 23 C23 23 28 26 30 34 Z" fill="#f0d0bc"/><ellipse cx="16" cy="15" rx="7" ry="8.5" fill="#e6c0a4"/><path d="M8.5 12 C9 6 12.5 4.5 16.5 4.5 C21 4.5 24 7 23.5 12 C20 9 12 9 8.5 12 Z" fill="#3a2a22"/><path d="M20 24 L26 30 L22 32 Z" fill="#e0b090"/></g></svg>
<div class="pname" style="top:828.0px">Bayu Handiyas</div>
<svg style="left:1561px;top:826px" width="17" height="18"><g fill="none" stroke="#d8d8d8" stroke-width="1.2" stroke-linecap="round"><rect x="5.2" y="1" width="6.2" height="10" rx="3.1"/><path d="M2.6 8 C2.6 11.4 5.2 13.6 8.3 13.6 C11.4 13.6 14 11.4 14 8 M8.3 13.6 V16.6"/><path d="M1 1 L15.8 16.4" stroke="#1c1c1c" stroke-width="2.8"/><path d="M1 1 L15.8 16.4"/></g></svg>

<!-- SCREEN SHARE -->
<div class="a" style="left:244px;top:247px;width:4px;height:609px;background:linear-gradient(to right,#2a080c,#7a1820 50%,#c8343c)"></div>
<div class="a" style="left:1009px;top:247px;width:3px;height:609px;background:#b32a3a"></div>
<div class="a" style="left:248px;top:248px;width:761px;height:585px;background:#fdfdfd"></div>
<div class="a" style="left:248px;top:247px;width:761px;height:1px;background:#d8d8d8"></div>
<!-- title row -->
<svg style="left:248px;top:249px" width="9" height="9"><rect x="0.5" y="0.5" width="7.5" height="7.5" rx="1.2" fill="#fff" stroke="#d63a3a" stroke-width="1"/><path d="M2 6.5 C3 4 4 2 4.3 1.5 C4.6 3 5 5 6.7 6 C5 5.6 3.5 5.8 2 6.5 Z" fill="none" stroke="#d63a3a" stroke-width="0.8"/></svg>
<div class="t" style="left:260px;top:249px;font-size:7px;color:#c2c2c2;letter-spacing:0px">PowerPoint Presentation - Adobe Acrobat Reader DC (32-bit)</div>
<div class="a" style="left:937px;top:252px;width:7px;height:1px;background:#9a9a9a"></div>
<svg style="left:964px;top:249px" width="9" height="8"><rect x="0.5" y="1.8" width="5.5" height="5.5" fill="none" stroke="#b0b0b0" stroke-width="0.9"/><path d="M2 0.5 H7.5 V5.8" fill="none" stroke="#b0b0b0" stroke-width="0.9"/></svg>
<svg style="left:992px;top:249px" width="8" height="7"><path d="M0.5 0.5 L7 6.5 M7 0.5 L0.5 6.5" stroke="#9a9a9a" stroke-width="0.9"/></svg>
<!-- menu row -->
<div class="t" style="left:250px;top:262px;font-size:7.8px;color:#555">File</div><div class="t" style="left:269px;top:262px;font-size:7.8px;color:#555">Edit</div><div class="t" style="left:289px;top:262px;font-size:7.8px;color:#555">View</div><div class="t" style="left:312.5px;top:262px;font-size:7.8px;color:#555">Sign</div><div class="t" style="left:335px;top:262px;font-size:7.8px;color:#555">Window</div><div class="t" style="left:369px;top:262px;font-size:7.8px;color:#555">Help</div>
<!-- tab row -->
<div class="a" style="left:248px;top:272px;width:761px;height:21px;background:#e9e9e9;border-bottom:1px solid #c9c9c9"></div>
<div class="a" style="left:336px;top:272px;width:107px;height:22px;background:#fdfdfd;border-left:1px solid #d4d4d4;border-right:1px solid #d4d4d4"></div>
<div class="a" style="left:443px;top:273px;width:109px;height:20px;background:#e4e4e4;border-right:1px solid #d0d0d0"></div>
<div class="t" style="left:256px;top:278px;font-size:10px;color:#4a5260;letter-spacing:-0.1px">Home</div>
<div class="t" style="left:299px;top:278px;font-size:10px;color:#5a5a5a;letter-spacing:-0.2px">Tools</div>
<div class="t" style="left:353px;top:279px;font-size:8.2px;color:#3a3a3a;letter-spacing:-0.2px">PowerPoint Present...</div>
<div class="t" style="left:431px;top:278px;font-size:9px;color:#333;font-weight:bold">×</div>
<div class="t" style="left:460px;top:279px;font-size:8.4px;color:#3a3a3a;letter-spacing:-0.15px">PowerPoint Present...</div>
<svg style="left:931px;top:276px" width="14" height="14"><circle cx="6.5" cy="6.5" r="5.6" fill="none" stroke="#555" stroke-width="1"/><path d="M4.9 5.2 C4.9 3.2 8.2 3.2 8.2 5.1 C8.2 6.3 6.6 6.4 6.6 7.8" fill="none" stroke="#555" stroke-width="1"/><circle cx="6.6" cy="9.6" r="0.6" fill="#555"/></svg>
<div class="t" style="left:962px;top:278px;font-size:10px;font-weight:bold;color:#555;letter-spacing:0px">Sign In</div>
<!-- toolbar row -->
<div class="a" style="left:248px;top:294px;width:761px;height:27px;background:#fafafa"></div>
<svg style="left:255px;top:301px" width="13" height="14" class="ai"><rect x="0.6" y="0.6" width="11" height="11.5" rx="1" fill="none" stroke="#bdbdbd" stroke-width="1"/><rect x="3" y="0.6" width="6" height="3.5" fill="none" stroke="#bdbdbd" stroke-width="0.9"/><rect x="2.5" y="7" width="7" height="5" fill="none" stroke="#bdbdbd" stroke-width="0.9"/></svg>
<svg style="left:280px;top:300px" width="15" height="15"><path d="M7.2 0.8 L9.2 5 L13.8 5.6 L10.4 8.7 L11.3 13.3 L7.2 11 L3.1 13.3 L4 8.7 L0.6 5.6 L5.2 5 Z" fill="none" stroke="#555" stroke-width="1.1" stroke-linejoin="round"/></svg>
<svg style="left:307px;top:301px" width="14" height="14"><path d="M3.5 10 C1.5 10 0.6 8.6 0.6 7.2 C0.6 5.5 2 4.3 3.5 4.5 C4 2.2 5.7 0.8 7.6 0.8 C10 0.8 11.6 2.8 11.5 5 C12.8 5.2 13.4 6.3 13.4 7.5 C13.4 8.9 12.5 10 11 10" fill="none" stroke="#555" stroke-width="1.1"/><path d="M7 13.5 V6 M4.6 8.3 L7 5.8 L9.4 8.3" fill="none" stroke="#555" stroke-width="1.1"/></svg>
<svg style="left:332px;top:301px" width="14" height="13"><rect x="3" y="0.5" width="7.5" height="3" fill="#555"/><rect x="0.5" y="3.5" width="12.5" height="6" rx="1" fill="#555"/><rect x="3" y="7.5" width="7.5" height="4.8" fill="#fff" stroke="#555" stroke-width="1"/></svg>
<svg style="left:359px;top:300px" width="15" height="15"><circle cx="5.8" cy="5.8" r="5" fill="none" stroke="#555" stroke-width="1.2"/><path d="M9.5 9.5 L13.8 13.8" stroke="#555" stroke-width="1.4"/><path d="M3.5 5.8 H8" stroke="#555" stroke-width="1"/></svg>
<svg style="left:402px;top:301px" width="14" height="14"><circle cx="6.5" cy="6.5" r="5.8" fill="none" stroke="#555" stroke-width="1.1"/><path d="M6.5 10.2 V3 M4 5.4 L6.5 2.9 L9 5.4" fill="none" stroke="#555" stroke-width="1.1"/></svg>
<svg style="left:428px;top:301px" width="14" height="14"><circle cx="6.5" cy="6.5" r="5.8" fill="none" stroke="#555" stroke-width="1.1"/><path d="M6.5 2.8 V10 M4 7.6 L6.5 10.1 L9 7.6" fill="none" stroke="#555" stroke-width="1.1"/></svg>
<div class="t" style="left:457px;top:304px;font-size:7px;color:#777">29&nbsp;&nbsp; /&nbsp; 77</div>
<div class="a" style="left:455px;top:315px;width:14px;height:1px;background:#e0e0e0"></div>
<div class="a" style="left:500px;top:298px;width:1px;height:19px;background:#e2e2e2"></div>
<svg style="left:515px;top:301px" width="10" height="13"><path d="M1 0.8 L9 7.6 L5.6 8 L7.8 12 L6.4 12.6 L4.3 8.6 L1.6 11 Z" fill="#2f76c2"/></svg>
<svg style="left:539px;top:300px" width="14" height="15"><path d="M2.8 8.5 V4.5 C2.8 3.6 4.2 3.6 4.2 4.5 V7 M4.2 7 V2.2 C4.2 1.3 5.6 1.3 5.6 2.2 V6.8 M5.6 6.8 V1.6 C5.6 0.7 7 0.7 7 1.6 V6.8 M7 6.8 V2.4 C7 1.5 8.4 1.5 8.4 2.4 V8 L9.8 6.6 C10.6 5.8 11.8 6.6 11.2 7.5 L8.8 11.5 C8 13 6.8 14 5 14 C3 14 1.2 12.6 1.2 10.3 V8 C1.2 7.2 2.8 7.2 2.8 8" fill="none" stroke="#555" stroke-width="1"/></svg>
<svg style="left:565px;top:301px" width="14" height="14"><circle cx="6.5" cy="6.5" r="5.8" fill="none" stroke="#555" stroke-width="1.1"/><path d="M3.8 6.5 H9.2" stroke="#555" stroke-width="1.1"/></svg>
<svg style="left:591px;top:301px" width="14" height="14"><circle cx="6.5" cy="6.5" r="5.8" fill="none" stroke="#555" stroke-width="1.1"/><path d="M3.8 6.5 H9.2 M6.5 3.8 V9.2" stroke="#555" stroke-width="1.1"/></svg>
<div class="t" style="left:622px;top:304px;font-size:6.8px;color:#888;letter-spacing:-0.2px">80,5%</div>
<svg style="left:650px;top:306px" width="6" height="4"><path d="M0.3 0.3 H5.2 L2.75 3 Z" fill="#666"/></svg>
<div class="a" style="left:620px;top:316px;width:38px;height:1px;background:#e6e6e6"></div>
<svg style="left:673px;top:300px" width="18" height="14"><path d="M0.7 0.7 H7.5 L10.5 3.7 V12.8 H0.7 Z" fill="#dfeaf6" stroke="#2f76c2" stroke-width="1.2"/><path d="M5.5 3.5 V11 M4 5 L5.5 3.5 L7 5 M4 9.5 L5.5 11 L7 9.5" fill="none" stroke="#2f76c2" stroke-width="0.9"/><path d="M13.5 5.5 H17 L15.25 7.3 Z" fill="#666"/></svg>
<svg style="left:705px;top:300px" width="14" height="14"><rect x="0.6" y="0.6" width="12.8" height="4" fill="none" stroke="#555" stroke-width="1.1"/><path d="M3 1 V3 M5.5 1 V3 M8 1 V3 M10.5 1 V3 M7 5 V12.5 M4.8 10.2 L7 12.5 L9.2 10.2" fill="none" stroke="#555" stroke-width="0.9"/></svg>
<div class="a" style="left:731px;top:298px;width:1px;height:19px;background:#e6e6e6"></div>
<svg style="left:745px;top:300px" width="13" height="14"><path d="M0.6 0.6 H11.8 V9 H6.5 L4 11.8 V9 H0.6 Z" fill="none" stroke="#555" stroke-width="1.1" stroke-linejoin="round"/><path d="M3 3.5 H9.5 M3 5.5 H9.5" stroke="#777" stroke-width="0.8"/></svg>
<svg style="left:770px;top:300px" width="14" height="14"><path d="M1.8 11 L10.5 1.2 C11.2 0.6 12.6 1.8 12 2.6 L3.6 12.2 L1.2 12.8 Z" fill="none" stroke="#555" stroke-width="1.1"/><path d="M1 13.2 H13" stroke="#ccc" stroke-width="1.2"/></svg>
<svg style="left:796px;top:300px" width="15" height="14"><path d="M1.2 11 C1 8 3 5.5 5.8 5.8 L9 1 L10.6 2 L7.8 6.8 C9 8.8 7.8 11.5 5 12 Z" fill="none" stroke="#555" stroke-width="1.1"/><path d="M9 12 C10 11 11 12.5 12 11.5 L14 12.4" fill="none" stroke="#555" stroke-width="1"/></svg>
<svg style="left:823px;top:300px" width="14" height="14"><path d="M2 2.5 H8.5 L13 7 L9 12.5 H2 Z" fill="none" stroke="#555" stroke-width="1.1" stroke-linejoin="round"/><rect x="1" y="2" width="3" height="3" fill="#555"/></svg>
<svg style="left:935px;top:300px" width="15" height="14"><path d="M4 8 L2.2 9.8 C1 11 2.5 13 3.8 11.8 L7 8.6 C8.2 7.4 6.8 5.6 5.5 6.6 M6.2 6 L9 3.2 C10.2 2 11.8 3.6 10.8 4.8 L8 7.8" fill="none" stroke="#555" stroke-width="1.1"/><path d="M8.5 13 L11 9.5 L14 13 Z" fill="#555"/></svg>
<svg style="left:961px;top:301px" width="14" height="12"><rect x="0.6" y="0.6" width="12.8" height="10" fill="none" stroke="#555" stroke-width="1.1"/><path d="M0.8 0.8 L7 6 L13.2 0.8 M0.8 10.4 L5 5 M13.2 10.4 L9 5" fill="none" stroke="#555" stroke-width="0.9"/></svg>
<svg style="left:987px;top:300px" width="15" height="15"><circle cx="5" cy="3" r="2.5" fill="#555"/><path d="M1 11 C1 7.5 3 6 5 6 C6.5 6 7.5 6.8 8 7.5 L7.5 11 Z" fill="#555"/><circle cx="10.5" cy="10.5" r="3.3" fill="#fff" stroke="#555" stroke-width="1.3"/></svg>

<!-- doc area -->
<div class="a" style="left:248px;top:321px;width:713px;height:512px;background:#f0f0f0"></div>
<div class="a" style="left:256px;top:321px;width:705px;height:58px;background:#9c9c9c"></div>
<div class="a" style="left:256px;top:776px;width:705px;height:57px;background:#9c9c9c"></div>
<svg style="left:249px;top:574px" width="4" height="7"><path d="M0.5 0.5 L3.5 3.5 L0.5 6.5 Z" fill="#555"/></svg>
<!-- scrollbar -->
<div class="a" style="left:961px;top:321px;width:22px;height:512px;background:#f2f2f2"></div>
<div class="a" style="left:970px;top:335px;width:1px;height:485px;background:#e2e2e2"></div>
<div class="a" style="left:979px;top:335px;width:1px;height:485px;background:#e2e2e2"></div>
<svg style="left:964px;top:325px" width="7" height="5"><path d="M0.8 4 L3.5 1 L6.2 4" fill="none" stroke="#555" stroke-width="1.2"/></svg>
<svg style="left:964px;top:825px" width="7" height="5"><path d="M0.8 1 L3.5 4 L6.2 1" fill="none" stroke="#555" stroke-width="1.2"/></svg>
<div class="a" style="left:962px;top:508px;width:10px;height:10px;background:#c6c6c6"></div>
<svg style="left:975px;top:574px" width="5" height="7"><path d="M4.5 0.5 L1 3.5 L4.5 6.5 Z" fill="#555"/></svg>
<!-- right pane -->
<div class="a" style="left:983px;top:321px;width:26px;height:512px;background:#fbfbfb;border-left:1px solid #dedede"></div>


<!-- SLIDE -->
<div class="a" style="left:256px;top:379px;width:705px;height:397px;background:linear-gradient(160deg,#e6e6e6 0%,#efefef 35%,#f4f4f4 60%,#e9e9e9 100%)"></div>
<div class="a" style="left:256px;top:410px;width:12px;height:38px;background:#f9c31b"></div>
<svg style="left:311px;top:411px" width="26" height="27"><defs><clipPath id="eq"><rect x="0" y="0" width="26" height="26"/></clipPath></defs><rect x="1" y="1" width="24.5" height="24.5" rx="4" fill="#f8c51c"/><g clip-path="url(#eq)"><path d="M19.6 17.5 A6.6 6.6 0 1 0 17.7 22.2" fill="none" stroke="#fffbea" stroke-width="3.6"/><path d="M6.6 17.3 H19.6" stroke="#fffbea" stroke-width="2.6"/></g></svg>
<div class="t" style="left:338px;top:418px;font-size:22px;color:#1c2751;letter-spacing:0.4px">filing</div>
<div class="t" style="left:391px;top:418px;font-size:22px;color:#1c2751;letter-spacing:-0.9px">SPT 1770SS</div>
<div class="a" style="left:502px;top:440px;width:25px;height:8px;background:#fafafa"></div>
<div class="a" style="left:927px;top:412px;width:34px;height:33px;background:#fbbe10;border-radius:4px 0 0 4px"></div>
<div class="t" style="left:927px;top:421px;width:34px;text-align:center;font-size:14px;font-weight:bold;color:#1e1e1e">25</div>
<div class="t" style="left:300px;top:557px;width:128px;text-align:center;font-size:14px;color:#2c3f66;line-height:26.4px;white-space:normal;letter-spacing:-0.2px">Isi Tahun Pajak,<br>Status SPT, lalu<br>klik<br><span style="color:#8a8a8a">“</span><b style="color:#1d2e5e">Selanjutnya</b>”.</div>
<!-- djp -->
<svg style="left:277px;top:740px" width="32" height="24"><defs><clipPath id="djy"><path d="M0 0 H32 V17.5 L0 7 Z"/></clipPath><clipPath id="djn"><path d="M0 7 L32 17.5 V24 H0 Z"/></clipPath></defs><rect x="4.5" y="4.5" width="22" height="15" rx="5" fill="none" stroke="#f7c81c" stroke-width="7" clip-path="url(#djy)"/><rect x="4.5" y="4.5" width="22" height="15" rx="5" fill="none" stroke="#1f2a5a" stroke-width="7" clip-path="url(#djn)"/></svg>
<div class="t" style="left:309px;top:739px;font-size:22px;font-weight:bold;color:#1f2a5a;letter-spacing:1.2px">djp</div>
<!-- bottom bars -->
<div class="a" style="left:651px;top:762px;width:76px;height:3px;background:#1c2545"></div>
<div class="a" style="left:727px;top:761px;width:154px;height:4.5px;background:linear-gradient(to right,#e8c23a,#f3de3c)"></div>
<div class="t" style="left:888px;top:758px;font-size:8px;font-weight:bold;color:#2a3558;letter-spacing:-0.2px">www.pajak.go.id</div>


<!-- FORM CARD -->
<div class="a" style="left:444px;top:457px;width:476px;height:273px;background:#fdfdfd;box-shadow:5px 4px 9px rgba(0,0,0,0.42)"></div>
<div class="a" style="left:452px;top:488px;width:468px;height:242px;background:#e8e9ee"></div>
<div class="a" style="left:444px;top:488px;width:10px;height:242px;background:linear-gradient(to right,#f4f4f4,#dcdde2)"></div>
<div class="a" style="left:462px;top:497px;width:451px;height:20px;background:#222b5f"></div>
<div class="a" style="left:462px;top:517px;width:451px;height:207px;background:#fefefe"></div>
<!-- tabs -->
<div class="a" style="left:453px;top:472px;width:57px;height:16px;background:#232c62;border-radius:4px 11px 0 0"></div>
<div class="a" style="left:511px;top:472px;width:54px;height:16px;background:#e9eaef;border-radius:4px 11px 0 0"></div>
<div class="a" style="left:567px;top:472px;width:56px;height:16px;background:#232c62;border-radius:4px 11px 0 0"></div>
<div class="a" style="left:624px;top:472px;width:54px;height:16px;background:#232c62;border-radius:4px 11px 0 0"></div>
<div class="t" style="left:461px;top:477px;font-size:6.6px;font-weight:bold;color:#f2f2f6;letter-spacing:-0.1px">Arsip SPT</div>
<div class="t" style="left:519px;top:477px;font-size:6.6px;color:#8a8c98;letter-spacing:-0.1px">Buat SPT</div>
<div class="t" style="left:575px;top:477px;font-size:6.6px;font-weight:bold;color:#f2f2f6;letter-spacing:-0.1px">Draft SPT</div>
<div class="t" style="left:633px;top:477px;font-size:6.6px;font-weight:bold;color:#f2f2f6;letter-spacing:-0.1px">Bantuan</div>
<!-- efiling logo -->
<svg style="left:853px;top:461px" width="21" height="20"><rect x="0.5" y="0.5" width="19" height="18.5" rx="3.5" fill="#f7c42a"/><path d="M14.8 12.8 A5 5 0 1 0 13.4 16.4" fill="none" stroke="#fffbea" stroke-width="2.8"/><path d="M4.8 12.6 H14.8" stroke="#fffbea" stroke-width="2"/></svg>
<div class="t" style="left:874px;top:464px;font-size:18.5px;color:#252f5c;letter-spacing:-0.2px">filing</div>
<!-- header -->
<svg style="left:473px;top:503px" width="7" height="8"><path d="M0.5 0.5 H4.5 L6.5 2.5 V7.5 H0.5 Z" fill="#8a90aa"/></svg>
<div class="t" style="left:485px;top:504px;font-size:6px;font-weight:bold;color:#eef0f6;letter-spacing:-0.1px">SPT 1770 SS</div>
<!-- orange side tab -->
<div class="a" style="left:444px;top:525px;width:22px;height:99px;background:#f5b222"></div>
<div class="t" style="left:452px;top:530px;font-size:7px;color:#fff">›</div>
<div class="t" style="left:455px;top:585px;font-size:6.2px;font-weight:bold;color:#fbe7c0;transform:translate(-50%,-50%) rotate(-90deg);transform-origin:center">Petunjuk Pengisian</div>
<!-- stacked page edge -->
<div class="a" style="left:445px;top:630px;width:8px;height:6px;background:#c4c6cc"></div>
<div class="a" style="left:445px;top:642px;width:8px;height:7px;background:#b8bac2"></div>
<div class="a" style="left:445px;top:656px;width:8px;height:7px;background:#c0c2ca"></div>
<div class="a" style="left:445px;top:670px;width:8px;height:7px;background:#c8cad0"></div>
<div class="a" style="left:446px;top:684px;width:6px;height:6px;background:#d0d2d8"></div>
<!-- content -->
<div class="t" style="left:472px;top:535px;font-size:9.5px;color:#555;letter-spacing:-0.1px">Isi Data Formulir</div>
<div class="a" style="left:472px;top:556px;width:431px;height:8px;background:#ebebef"></div>
<div class="a" style="left:472px;top:556px;width:144px;height:8px;background:#f4b12e"></div>
<div class="t" style="left:536px;top:557px;font-size:5px;color:#fde9c0">33.33%</div>
<div class="t" style="left:472px;top:569px;font-size:5.2px;color:#55607a">Halaman ke 1 dari 3</div>
<div class="a" style="left:472px;top:587px;width:431px;height:1px;background:#f2f2f4"></div>
<div class="t" style="left:472px;top:589px;font-size:7.4px;font-weight:bold;color:#3a3a3a;letter-spacing:-0.1px">Data Formulir</div>
<div class="t" style="left:545px;top:614px;font-size:5.6px;color:#8a8a8a">Tahun Pajak</div>
<div class="t" style="left:545px;top:634px;font-size:5.6px;color:#8a8a8a">Status SPT</div>
<div class="t" style="left:545px;top:662px;font-size:5.6px;color:#8a8a8a">Pembetulan Ke</div>
<div class="a" style="left:655px;top:608px;width:175px;height:17px;border:1px solid #eeeeee;background:#fff"></div>
<div class="t" style="left:663px;top:614px;font-size:5.6px;color:#777">2020</div>
<svg style="left:823px;top:615px" width="5" height="4"><path d="M0.3 0.5 L2.5 3 L4.7 0.5" fill="none" stroke="#555" stroke-width="0.9"/></svg>
<svg style="left:654px;top:629px" width="9" height="9"><circle cx="4.2" cy="4.2" r="3.6" fill="#fff" stroke="#6a78d8" stroke-width="1"/><circle cx="4.2" cy="4.2" r="1.7" fill="#4a5ad0"/></svg>
<div class="t" style="left:667px;top:630px;font-size:5.6px;color:#999">Normal</div>
<svg style="left:654px;top:641px" width="12" height="11"><circle cx="4.2" cy="5" r="3.6" fill="#fff" stroke="#555a80" stroke-width="1"/><path d="M5 0.5 V10.5" stroke="#333" stroke-width="1"/><path d="M7 4.5 H9" stroke="#333" stroke-width="0.9"/></svg>
<div class="t" style="left:663px;top:643px;font-size:5.6px;color:#999">Pembetulan</div>
<div class="a" style="left:655px;top:657px;width:175px;height:13px;background:#f2f2f5"></div>
<div class="t" style="left:820px;top:661px;font-size:5.6px;color:#777">3</div>
<div class="a" style="left:462px;top:696px;width:451px;height:1px;background:#f6f6f8"></div>
<div class="a" style="left:850px;top:701px;width:53px;height:17px;background:#1f2862;border-radius:9px"></div>
<div class="t" style="left:857px;top:706px;font-size:5.6px;color:#e6e8f2">Selanjutnya</div>
<svg style="left:889px;top:706px" width="5" height="7"><path d="M1 0.8 L3.8 3.5 L1 6.2" fill="none" stroke="#fff" stroke-width="1.2"/></svg>


<!-- RIGHT PANE ICONS -->
<svg style="left:990px;top:329px" width="14" height="14"><circle cx="5.8" cy="5.8" r="4.9" fill="none" stroke="#555" stroke-width="1.2"/><path d="M9.4 9.4 L13 13" stroke="#555" stroke-width="1.5"/><path d="M3.2 5.8 C4.6 3.8 7 3.8 8.4 5.8 C7 7.8 4.6 7.8 3.2 5.8 Z" fill="none" stroke="#555" stroke-width="0.8"/><circle cx="5.8" cy="5.8" r="0.9" fill="#555"/></svg>
<div class="a" style="left:987px;top:349px;width:18px;height:1px;background:#dadada"></div>
<svg style="left:990px;top:356px" width="14" height="15"><path d="M0.6 0.6 H6.5 L9.5 3.6 V12 H0.6 Z" fill="none" stroke="#2a9aa0" stroke-width="1.1"/><path d="M3 8.5 C4 6.5 4.5 4.5 4.5 3" fill="none" stroke="#2a9aa0" stroke-width="0.8"/><circle cx="10" cy="11" r="3.3" fill="#2a9aa0"/><path d="M8.4 11 H11.6 M10.6 10 L11.6 11 L10.6 12" stroke="#fff" stroke-width="0.8" fill="none"/></svg>
<svg style="left:990px;top:384px" width="14" height="14"><rect x="0.6" y="0.6" width="12.5" height="5" fill="none" stroke="#d04aa8" stroke-width="1.1"/><rect x="0.6" y="7.5" width="5.5" height="5" fill="none" stroke="#d04aa8" stroke-width="1.1"/><path d="M8 8.5 H13 M8 10.5 H13 M8 12.5 H12" stroke="#d04aa8" stroke-width="0.9"/></svg>
<svg style="left:990px;top:412px" width="14" height="15"><path d="M0.6 0.6 H6.5 L9.5 3.6 V12 H0.6 Z" fill="none" stroke="#d8404a" stroke-width="1.1"/><path d="M3 8.5 C4 6.5 4.5 4.5 4.5 3" fill="none" stroke="#d8404a" stroke-width="0.8"/><circle cx="10" cy="11" r="3.3" fill="#d8404a"/><path d="M8.4 11 H11.6 M10 9.4 V12.6" stroke="#fff" stroke-width="0.9"/></svg>
<svg style="left:990px;top:440px" width="14" height="13"><path d="M0.6 0.6 H12.6 V8.6 H6.5 L4 11.6 V8.6 H0.6 Z" fill="#e3c22a" stroke="#d4b21a" stroke-width="1" stroke-linejoin="round"/><path d="M3 3.4 H10 M3 5.6 H10" stroke="#fff8d0" stroke-width="0.8"/></svg>
<svg style="left:990px;top:466px" width="14" height="14"><rect x="5" y="0.6" width="8.5" height="9" fill="#5a62d0"/><rect x="0.6" y="2.5" width="7" height="7.5" fill="#fff" stroke="#5a62d0" stroke-width="1"/><path d="M4 10 V13.2 M2.4 11.8 L4 13.4 L5.6 11.8" stroke="#5a62d0" stroke-width="1" fill="none"/></svg>
<svg style="left:990px;top:494px" width="14" height="14"><rect x="0.6" y="0.6" width="12.5" height="12.5" fill="none" stroke="#7ccc5a" stroke-width="1.1"/><rect x="0.6" y="5" width="5" height="8" fill="#a8dc8a"/><path d="M7 0.6 V13" stroke="#7ccc5a" stroke-width="1"/></svg>
<svg style="left:990px;top:521px" width="14" height="15"><path d="M3 0.6 H11 L13.4 3.5 V11 L11 13.6 H3 L0.6 11 V3.5 Z" fill="none" stroke="#2a9aa0" stroke-width="1.1"/><circle cx="7" cy="5.5" r="1.7" fill="none" stroke="#2a9aa0" stroke-width="0.9"/><path d="M4 10.5 C4.5 8.5 9.5 8.5 10 10.5" fill="none" stroke="#2a9aa0" stroke-width="0.9"/></svg>
<svg style="left:990px;top:550px" width="14" height="13"><path d="M1.5 10 L9.5 1.2 C10.2 0.5 11.5 1.6 10.9 2.4 L3.3 11 L0.8 11.6 Z" fill="none" stroke="#e0457a" stroke-width="1.1"/><path d="M6 11.5 C7 10.5 8 12 9 11 L13 11.5" fill="none" stroke="#e0457a" stroke-width="1.1"/></svg>
<svg style="left:991px;top:576px" width="13" height="15"><path d="M6.2 0.8 C4.5 1.8 2.6 2.4 0.8 2.4 V7 C0.8 10 3 12.2 6.2 13.8 C9.4 12.2 11.6 10 11.6 7 V2.4 C9.8 2.4 7.9 1.8 6.2 0.8 Z" fill="#eef0fb" stroke="#6a74cc" stroke-width="1.1"/></svg>
<svg style="left:990px;top:605px" width="14" height="13"><path d="M1.5 10 L9.5 1.2 C10.2 0.5 11.5 1.6 10.9 2.4 L3.3 11 L0.8 11.6 Z" fill="none" stroke="#9a58d8" stroke-width="1.1"/><path d="M6 11.5 C7 10.5 8 12 9 11 L13 11.5" fill="none" stroke="#9a58d8" stroke-width="1.1"/></svg>
<svg style="left:990px;top:631px" width="14" height="15"><path d="M0.6 0.6 H6.5 L9.5 3.6 V12.5 H0.6 Z" fill="#f4e27a" stroke="#d8bc20" stroke-width="1.1"/><rect x="7.5" y="8.5" width="5.5" height="5.5" fill="#e8c828"/><path d="M10.25 9.5 V13 M8.5 11.25 H12" stroke="#fff" stroke-width="0.8"/></svg>
<svg style="left:990px;top:660px" width="14" height="14"><path d="M1.5 12.5 L7 7 M6 2.5 C7 0.8 9.5 0.6 10.6 1.6 L8.6 3.6 L9.6 4.6 L11.6 2.6 C12.4 4 12 6.4 10 7.2" fill="none" stroke="#555" stroke-width="1.4"/><circle cx="10.5" cy="10.5" r="3" fill="#fff" stroke="#555" stroke-width="1.2"/><path d="M9 10.5 H12 M10.5 9 V12" stroke="#555" stroke-width="0.9"/></svg>
<div class="a" style="left:987px;top:805px;width:18px;height:1px;background:#e0e0e0"></div>
<svg style="left:994px;top:814px" width="10" height="10"><path d="M0.8 0.5 V9.5" stroke="#555" stroke-width="1.4"/><path d="M2 5 H7 M5.2 2.8 L7.6 5 L5.2 7.2" fill="none" stroke="#555" stroke-width="1.3"/></svg>

<!-- TASKBAR -->
<div class="a" style="left:248px;top:833px;width:761px;height:23px;background:linear-gradient(to right,#04060f,#030716 60%,#051030 85%,#030818)"></div>
<div class="a" style="left:626px;top:833px;width:29px;height:23px;background:#a45a30"></div>
<svg style="left:255px;top:840px" width="11" height="10"><path d="M0.5 1.5 L4.5 0.9 V4.6 H0.5 Z M5.3 0.8 L10.5 0 V4.6 H5.3 Z M0.5 5.4 H4.5 V9.1 L0.5 8.5 Z M5.3 5.4 H10.5 V10 L5.3 9.2 Z" fill="#f4f4f4"/></svg>
<svg style="left:283px;top:840px" width="11" height="11"><circle cx="6.5" cy="4" r="3.2" fill="none" stroke="#ddd" stroke-width="1"/><path d="M4.2 6.3 L0.8 9.8" stroke="#ddd" stroke-width="1.1"/></svg>
<svg style="left:310px;top:840px" width="15" height="11"><rect x="2.5" y="1" width="8" height="9" fill="none" stroke="#ccc" stroke-width="1"/><path d="M0.8 2.5 V8.5 M12.2 2.5 V8.5 M13.8 2.5 V8.5" stroke="#ccc" stroke-width="0.9"/></svg>
<svg style="left:341px;top:839px" width="13" height="13"><path d="M1 7 C1 3 3.5 0.8 6.8 0.8 C10 0.8 12.2 3 12.2 6.5 V7.6 H4 C4.2 9.6 5.6 10.6 7.6 10.6 C9 10.6 10.4 10.2 11.6 9.4 V11.8 C10.4 12.4 9 12.6 7.2 12.6 C3.4 12.6 1 10.6 1 7 Z M4.2 5.4 H9.4 C9.2 3.8 8.2 3 6.8 3 C5.4 3 4.4 3.8 4.2 5.4 Z" fill="#1e7ad8"/></svg>
<svg style="left:370px;top:840px" width="13" height="11"><path d="M0.5 1 H5 L6 2.2 H12.5 V10.5 H0.5 Z" fill="#f2d36a"/><rect x="0.5" y="4" width="12" height="6.5" fill="#f8e08a"/><rect x="3.5" y="6.5" width="6" height="4" fill="#3aa0a8"/></svg>
<svg style="left:398px;top:838px" width="14" height="14"><path d="M4 4 C4 1.5 5.5 0.6 7 0.6 C8.5 0.6 10 1.5 10 4" fill="none" stroke="#f4f4f4" stroke-width="1.1"/><rect x="1" y="4" width="12" height="9.5" rx="1" fill="#f4f4f4"/><path d="M3.8 6.6 L6.6 6.2 V8.6 H3.8 Z M7.2 6.1 L10.2 5.7 V8.6 H7.2 Z M3.8 9.2 H6.6 V11.5 L3.8 11.1 Z M7.2 9.2 H10.2 V12 L7.2 11.6 Z" fill="#2a2a2a"/></svg>
<svg style="left:428px;top:840px" width="13" height="11"><rect x="0.5" y="0.5" width="12" height="10" rx="1" fill="#aab4c0"/><path d="M5 3 L9 5.5 L5 8 Z" fill="#f08a2a"/></svg>
<svg style="left:457px;top:838px" width="15" height="15"><circle cx="7.5" cy="7.5" r="7" fill="#1a5ae0"/><rect x="3" y="6.6" width="9" height="1.8" fill="#c8d8ff"/></svg>
<svg style="left:487px;top:838px" width="14" height="14"><path d="M1.5 7.5 C1.5 4 3.8 1.8 7 1.8 C10 1.8 12.2 4 12.2 7.2 V8.2 H4.6 C4.8 10 6 11 7.6 11 C9 11 10.2 10.4 11 9.6 L12 11 C10.8 12.4 9.2 13 7.4 13 C3.8 13 1.5 10.8 1.5 7.5 Z M4.6 6 H9.4 C9.2 4.6 8.4 3.8 7 3.8 C5.6 3.8 4.8 4.6 4.6 6 Z" fill="#6ad0f0"/><path d="M1 11 C3 6 8 2 13 1.5" fill="none" stroke="#f2c84a" stroke-width="1"/></svg>
<svg style="left:515px;top:838px" width="15" height="15"><circle cx="7.5" cy="7.5" r="7" fill="#e04a3a"/><path d="M7.5 7.5 L13.6 4 A7 7 0 0 1 7.5 14.5 Z" fill="#f2c230"/><path d="M7.5 7.5 L7.5 14.5 A7 7 0 0 1 1.4 4 Z" fill="#2ea050"/><circle cx="7.5" cy="7.5" r="3.4" fill="#fff"/><circle cx="7.5" cy="7.5" r="2.6" fill="#3a7ae0"/></svg>
<svg style="left:545px;top:838px" width="14" height="15"><circle cx="7" cy="8" r="6.3" fill="#f0602a"/><circle cx="7.5" cy="8.5" r="3.4" fill="#7a3ac0"/><path d="M2 4 C3 1.5 5 0.5 6 1.5 C5 3 6 4 7 4" fill="#f8b030"/></svg>
<svg style="left:574px;top:839px" width="15" height="12"><path d="M0.5 3 L8 1 L10 8 L2.5 10 Z" fill="#b8e8c8"/><path d="M4 4 L12 2.5 L14.5 9.5 L6.5 11 Z" fill="#f2e28a"/></svg>
<svg style="left:603px;top:838px" width="16" height="15"><circle cx="9" cy="7.5" r="6.5" fill="#e8583a"/><rect x="1" y="3.5" width="8" height="8" rx="1" fill="#c43a1e"/><path d="M3.5 10 V5 H5.5 C6.8 5 7.2 5.8 7.2 6.6 C7.2 7.4 6.8 8.2 5.5 8.2 H3.5" fill="none" stroke="#fff" stroke-width="1"/></svg>
<svg style="left:632px;top:837px" width="17" height="17"><circle cx="11" cy="4" r="2.6" fill="#7b83eb"/><rect x="7" y="5" width="9" height="8" rx="3" fill="#7b83eb"/><rect x="1" y="3" width="10" height="10" rx="1.2" fill="#5059c9"/><path d="M3.5 5.5 H8.5 M6 5.5 V11" stroke="#fff" stroke-width="1.4"/><circle cx="12" cy="12.5" r="3.6" fill="#d8283a"/><path d="M12 10.6 V14.4" stroke="#fff" stroke-width="1"/></svg>
<svg style="left:662px;top:838px" width="15" height="15"><rect x="0.5" y="0.5" width="13.5" height="13.5" rx="2" fill="#c81e1e"/><path d="M2.8 11 C4.5 9 5.8 6.5 6.6 3 C7 5.8 8.4 8.4 11.5 9.4 C8.6 9.2 5.8 9.8 2.8 11 Z" fill="none" stroke="#fff" stroke-width="1"/></svg>

<!-- name label -->
<div class="a" style="left:4px;top:823px;width:196px;height:24px;background:#121212;border-radius:3px"></div>
<div class="t" style="left:11px;top:829px;font-size:12.6px;color:#f0f0f0;letter-spacing:-0.3px">RIONO ASNAN GENDA (External)</div>

<!-- bottom strip -->
<div class="a" style="left:0;top:856px;width:1600px;height:8px;background:#1c1c1c"></div>
<div class="a" style="left:0;top:860px;width:41px;height:4px;background:#2c2e26"></div>
<div class="a" style="left:41px;top:860px;width:302px;height:4px;background:#f0f0f0"></div>
<div class="a" style="left:343px;top:860px;width:1257px;height:4px;background:#2a2b26"></div>

</div></body></html>
